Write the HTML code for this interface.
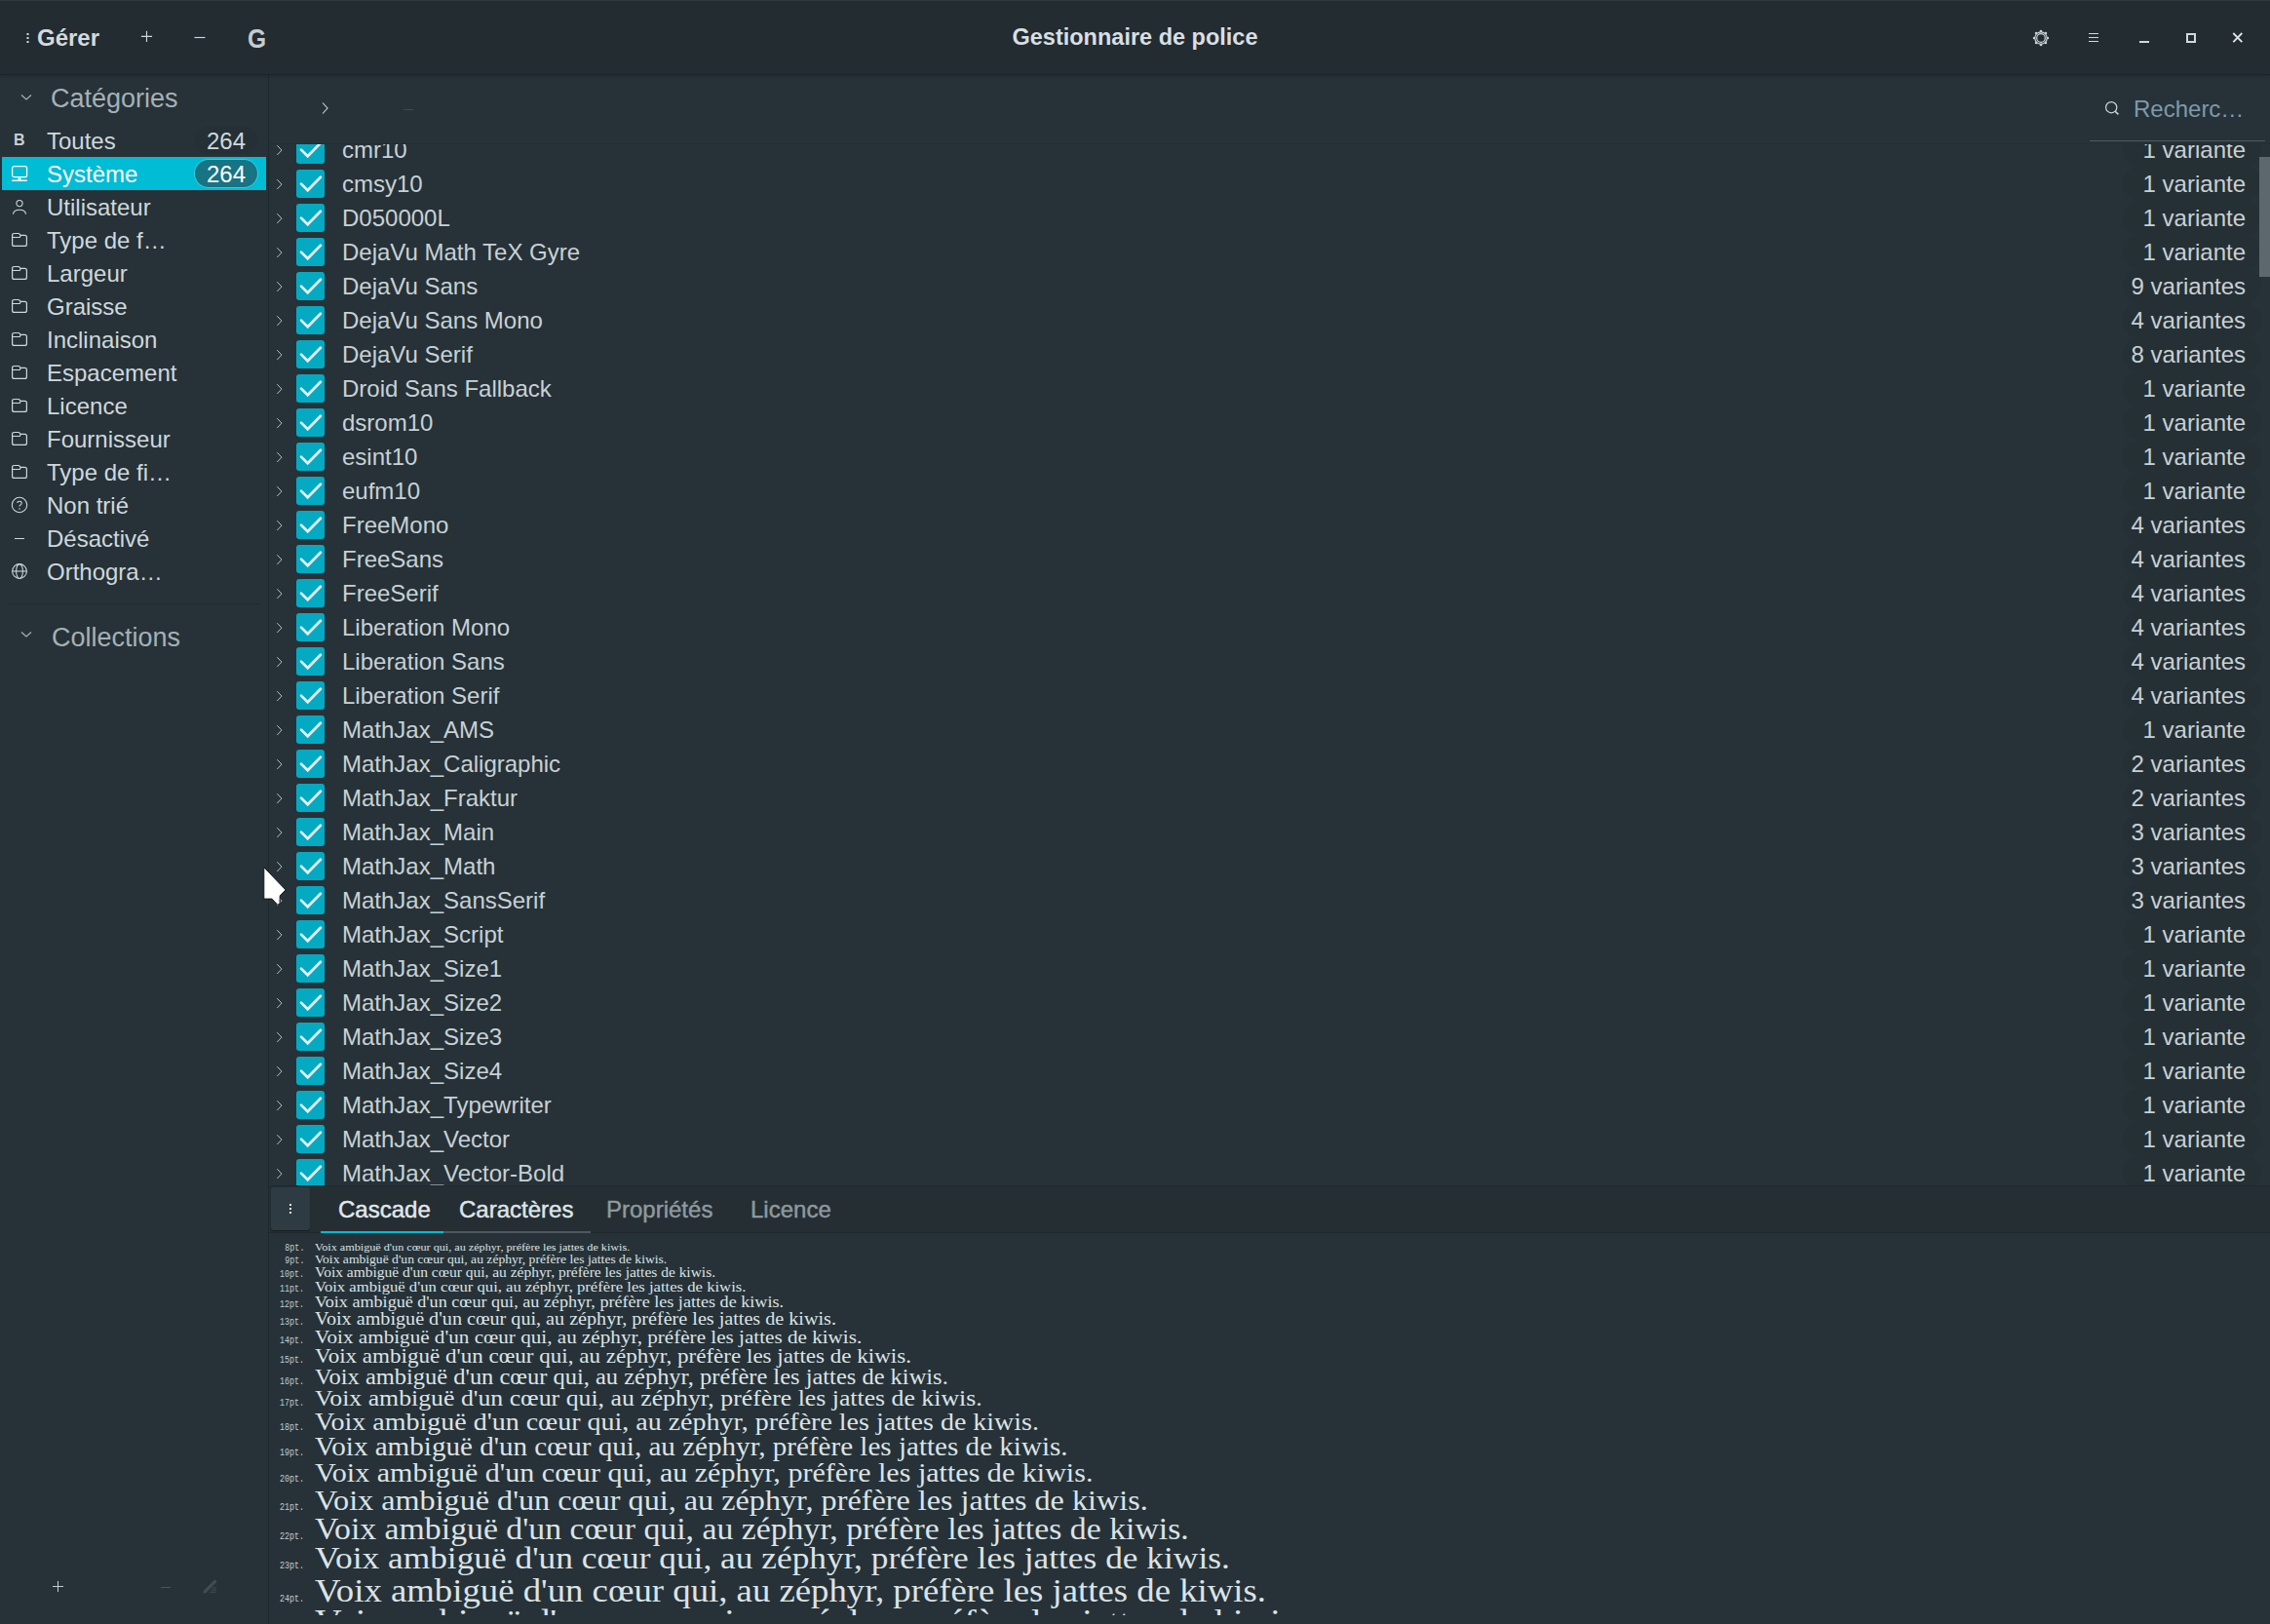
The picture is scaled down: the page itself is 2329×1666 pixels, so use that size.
<!DOCTYPE html><html><head><meta charset="utf-8"><title>Gestionnaire de police</title><style>
*{margin:0;padding:0;box-sizing:border-box}
html,body{width:2329px;height:1666px;overflow:hidden;background:#263238;font-family:"Liberation Sans",sans-serif;color:#cfd8dc}
.abs{position:absolute}
#hdr{position:absolute;left:0;top:0;width:2329px;height:77px;background:#222c31;border-top:1px solid #2f393e;border-bottom:1px solid #1c2428;box-shadow:0 1px 3px rgba(0,0,0,0.18);z-index:5}
.t{position:absolute;white-space:nowrap;line-height:1}
#side{position:absolute;left:0;top:77px;width:275px;height:1589px;background:#263238}
#sideline{position:absolute;left:275px;top:77px;width:1px;height:1589px;background:#1f282c}
.srow{position:absolute;left:2px;width:271px;height:34px}
.srow.sel{background:#00bcd4}
.stext{position:absolute;left:46px;top:1px;font-size:24px;line-height:34px;color:#cfd8dc}
.sel .stext{color:#ffffff}
.scount{position:absolute;left:198px;top:3px;width:64px;height:28px;border-radius:14px;font-size:24px;line-height:30px;text-align:center;color:#cfd8dc;background:#243036}
.sel .scount{background:#187383;color:#fff;box-shadow:0 0 0 1px rgba(120,225,240,0.45)}
.ic{position:absolute;left:8px}
.bicon{position:absolute;left:12px;font-weight:bold;font-size:16px;line-height:26px;color:#c8d0d4}
#list{position:absolute;left:276px;top:148px;width:2053px;height:1068px;overflow:hidden}
.row{position:absolute;left:0;width:2053px;height:35px}
.chev{position:absolute;left:6px;top:11px}
.cb{position:absolute;left:28px;top:3px;width:29px;height:29px;border-radius:3px;background:#04aac2}
.cb svg{position:absolute;left:0;top:0}
.name{position:absolute;left:75px;top:0;font-size:24px;line-height:35px;color:#c8d1d5;white-space:nowrap}
.var{position:absolute;right:25px;top:0;font-size:24px;line-height:35px;color:#c8d1d5;white-space:nowrap;text-align:right}
.pill{position:absolute;right:9px;top:0;width:142px;height:35px;border-radius:17px;background:#253035}
#tabs{position:absolute;left:276px;top:1217px;width:2053px;height:48px;background:#242e33;border-bottom:1px solid #1f282c}
.tab{position:absolute;top:0;font-size:24px;line-height:48px;white-space:nowrap;-webkit-text-stroke:0.45px currentColor}
#prev{position:absolute;left:276px;top:1265px;width:2053px;height:392px;overflow:hidden;background:#263238}
.pl{position:absolute;white-space:nowrap;line-height:1}
.lab{position:absolute;font-family:"Liberation Mono",monospace;color:#c3cbcf;font-size:11px;white-space:nowrap;transform:scaleX(0.76);transform-origin:right bottom;line-height:1}
.ser{position:absolute;font-family:"Liberation Serif",serif;color:#dce3e6;white-space:nowrap;line-height:1;transform-origin:left bottom}
</style></head><body>
<div id="hdr">
<svg class="abs" style="left:26px;top:32px" width="5" height="13" viewBox="0 0 5 13"><rect x="1.5" y="1" width="2" height="2" fill="#d6dde0"/><rect x="1.5" y="5" width="2" height="2" fill="#d6dde0"/><rect x="1.5" y="9" width="2" height="2" fill="#d6dde0"/></svg>
<div class="t" style="left:38px;top:26px;font-weight:bold;font-size:24px;color:#d3dadd">Gérer</div>
<svg class="abs" style="left:143px;top:29px" width="15" height="15" viewBox="0 0 15 15"><path d="M7.5 1.8v11.2M1.9 7.4h11.2" stroke="#cfd8dc" stroke-width="1.15"/></svg>
<svg class="abs" style="left:198px;top:30px" width="15" height="15" viewBox="0 0 15 15"><path d="M1.5 7.5h11" stroke="#cfd8dc" stroke-width="1.15"/></svg>
<div class="t" style="left:254px;top:24px;font-weight:bold;font-size:28.5px;color:#c5cdd1;transform:scaleX(0.86);transform-origin:left top">G</div>
<div class="t" style="left:0;width:2329px;text-align:center;top:26px;font-weight:bold;font-size:23.5px;color:#d8dfe2">Gestionnaire de police</div>
<svg class="abs" style="left:2084px;top:28px" width="20" height="20" viewBox="0 0 20 20"><g fill="#c9d1d5"><circle cx="10" cy="10" r="6.8"/><circle cx="10.00" cy="3.10" r="1.35"/><circle cx="5.12" cy="5.12" r="1.35"/><circle cx="3.10" cy="10.00" r="1.35"/><circle cx="5.12" cy="14.88" r="1.35"/><circle cx="10.00" cy="16.90" r="1.35"/><circle cx="14.88" cy="14.88" r="1.35"/><circle cx="16.90" cy="10.00" r="1.35"/><circle cx="14.88" cy="5.12" r="1.35"/></g><circle cx="10" cy="10" r="5.6" fill="#222c31"/><circle cx="10" cy="10" r="4.3" fill="none" stroke="#c9d1d5" stroke-width="1.2"/></svg>
<svg class="abs" style="left:2141px;top:29px" width="14" height="15" viewBox="0 0 14 15"><path d="M2 4.5h10M2 8.5h10M2 12.5h10" stroke="#cfd8dc" stroke-width="1"/></svg>
<div class="abs" style="left:2195px;top:41px;width:10px;height:2px;background:#cfd8dc"></div>
<div class="abs" style="left:2243px;top:33px;width:10px;height:10px;border:2px solid #cfd8dc"></div>
<svg class="abs" style="left:2289px;top:30px" width="14" height="14" viewBox="0 0 14 14"><path d="M2.3 3l9 9.2M11.3 3l-9 9.2" stroke="#dfe5e7" stroke-width="1.8"/></svg>
</div>
<div id="side">
<svg class="abs" style="left:20px;top:18px" width="14" height="10" viewBox="0 0 14 10"><path d="M2 2.5l5 4.5 5-4.5" fill="none" stroke="#aab5ba" stroke-width="1.1"/></svg>
<div class="t" style="left:52px;top:11px;font-size:27px;color:#a5b1b6">Catégories</div>
<div class="srow" style="top:50px">
<div class="bicon" style="top:4px">B</div>
<div class="stext">Toutes</div>
<div class="scount">264</div>
</div>
<div class="srow sel" style="top:84px">
<svg class="ic" style="top:7px" width="20" height="20" viewBox="0 0 20 20"><rect x="2.6" y="2.7" width="15" height="11" rx="2" fill="none" stroke="#ffffff" stroke-width="1.25"/><rect x="2" y="16.6" width="16" height="1.5" rx="0.6" fill="#ffffff"/><rect x="8.6" y="14" width="2.8" height="2.8" fill="#ffffff"/></svg>
<div class="stext">Système</div>
<div class="scount">264</div>
</div>
<div class="srow" style="top:118px">
<svg class="ic" style="top:7px" width="20" height="20" viewBox="0 0 20 20"><circle cx="10" cy="6.6" r="3.1" fill="none" stroke="#cfd8dc" stroke-width="1.1"/><path d="M3.5 17.8 C3.8 14.6 6.6 13.3 10 13.3 C13.4 13.3 16.2 14.6 16.5 17.8" fill="none" stroke="#cfd8dc" stroke-width="1.1"/></svg>
<div class="stext">Utilisateur</div>
</div>
<div class="srow" style="top:152px">
<svg class="ic" style="top:7px" width="20" height="20" viewBox="0 0 20 20"><path d="M2.6 5.5V14.4Q2.6 16.4 4.6 16.4H15.4Q17.4 16.4 17.4 14.4V7.3Q17.4 5.3 15.4 5.3H11L9.9 3.9Q9.6 3.5 9 3.5H4.6Q2.6 3.5 2.6 5.5Z M2.6 7.5H9.6Q10.2 7.5 10.5 7.1L11.3 5.5" fill="none" stroke="#cfd8dc" stroke-width="1.2" stroke-linejoin="round"/></svg>
<div class="stext">Type de f…</div>
</div>
<div class="srow" style="top:186px">
<svg class="ic" style="top:7px" width="20" height="20" viewBox="0 0 20 20"><path d="M2.6 5.5V14.4Q2.6 16.4 4.6 16.4H15.4Q17.4 16.4 17.4 14.4V7.3Q17.4 5.3 15.4 5.3H11L9.9 3.9Q9.6 3.5 9 3.5H4.6Q2.6 3.5 2.6 5.5Z M2.6 7.5H9.6Q10.2 7.5 10.5 7.1L11.3 5.5" fill="none" stroke="#cfd8dc" stroke-width="1.2" stroke-linejoin="round"/></svg>
<div class="stext">Largeur</div>
</div>
<div class="srow" style="top:220px">
<svg class="ic" style="top:7px" width="20" height="20" viewBox="0 0 20 20"><path d="M2.6 5.5V14.4Q2.6 16.4 4.6 16.4H15.4Q17.4 16.4 17.4 14.4V7.3Q17.4 5.3 15.4 5.3H11L9.9 3.9Q9.6 3.5 9 3.5H4.6Q2.6 3.5 2.6 5.5Z M2.6 7.5H9.6Q10.2 7.5 10.5 7.1L11.3 5.5" fill="none" stroke="#cfd8dc" stroke-width="1.2" stroke-linejoin="round"/></svg>
<div class="stext">Graisse</div>
</div>
<div class="srow" style="top:254px">
<svg class="ic" style="top:7px" width="20" height="20" viewBox="0 0 20 20"><path d="M2.6 5.5V14.4Q2.6 16.4 4.6 16.4H15.4Q17.4 16.4 17.4 14.4V7.3Q17.4 5.3 15.4 5.3H11L9.9 3.9Q9.6 3.5 9 3.5H4.6Q2.6 3.5 2.6 5.5Z M2.6 7.5H9.6Q10.2 7.5 10.5 7.1L11.3 5.5" fill="none" stroke="#cfd8dc" stroke-width="1.2" stroke-linejoin="round"/></svg>
<div class="stext">Inclinaison</div>
</div>
<div class="srow" style="top:288px">
<svg class="ic" style="top:7px" width="20" height="20" viewBox="0 0 20 20"><path d="M2.6 5.5V14.4Q2.6 16.4 4.6 16.4H15.4Q17.4 16.4 17.4 14.4V7.3Q17.4 5.3 15.4 5.3H11L9.9 3.9Q9.6 3.5 9 3.5H4.6Q2.6 3.5 2.6 5.5Z M2.6 7.5H9.6Q10.2 7.5 10.5 7.1L11.3 5.5" fill="none" stroke="#cfd8dc" stroke-width="1.2" stroke-linejoin="round"/></svg>
<div class="stext">Espacement</div>
</div>
<div class="srow" style="top:322px">
<svg class="ic" style="top:7px" width="20" height="20" viewBox="0 0 20 20"><path d="M2.6 5.5V14.4Q2.6 16.4 4.6 16.4H15.4Q17.4 16.4 17.4 14.4V7.3Q17.4 5.3 15.4 5.3H11L9.9 3.9Q9.6 3.5 9 3.5H4.6Q2.6 3.5 2.6 5.5Z M2.6 7.5H9.6Q10.2 7.5 10.5 7.1L11.3 5.5" fill="none" stroke="#cfd8dc" stroke-width="1.2" stroke-linejoin="round"/></svg>
<div class="stext">Licence</div>
</div>
<div class="srow" style="top:356px">
<svg class="ic" style="top:7px" width="20" height="20" viewBox="0 0 20 20"><path d="M2.6 5.5V14.4Q2.6 16.4 4.6 16.4H15.4Q17.4 16.4 17.4 14.4V7.3Q17.4 5.3 15.4 5.3H11L9.9 3.9Q9.6 3.5 9 3.5H4.6Q2.6 3.5 2.6 5.5Z M2.6 7.5H9.6Q10.2 7.5 10.5 7.1L11.3 5.5" fill="none" stroke="#cfd8dc" stroke-width="1.2" stroke-linejoin="round"/></svg>
<div class="stext">Fournisseur</div>
</div>
<div class="srow" style="top:390px">
<svg class="ic" style="top:7px" width="20" height="20" viewBox="0 0 20 20"><path d="M2.6 5.5V14.4Q2.6 16.4 4.6 16.4H15.4Q17.4 16.4 17.4 14.4V7.3Q17.4 5.3 15.4 5.3H11L9.9 3.9Q9.6 3.5 9 3.5H4.6Q2.6 3.5 2.6 5.5Z M2.6 7.5H9.6Q10.2 7.5 10.5 7.1L11.3 5.5" fill="none" stroke="#cfd8dc" stroke-width="1.2" stroke-linejoin="round"/></svg>
<div class="stext">Type de fi…</div>
</div>
<div class="srow" style="top:424px">
<svg class="ic" style="top:7px" width="20" height="20" viewBox="0 0 20 20"><circle cx="10" cy="10" r="7.7" fill="none" stroke="#cfd8dc" stroke-width="1.05"/><path d="M7.8 8 C7.8 5.6 12.2 5.6 12.2 8 C12.2 9.8 10 9.8 10 11.6" fill="none" stroke="#cfd8dc" stroke-width="1.05"/><circle cx="10" cy="14" r="0.75" fill="#cfd8dc"/></svg>
<div class="stext">Non trié</div>
</div>
<div class="srow" style="top:458px">
<svg class="ic" style="top:7px" width="20" height="20" viewBox="0 0 20 20"><path d="M5 10.5h10" stroke="#cfd8dc" stroke-width="1"/></svg>
<div class="stext">Désactivé</div>
</div>
<div class="srow" style="top:492px">
<svg class="ic" style="top:7px" width="20" height="20" viewBox="0 0 20 20"><circle cx="10" cy="10" r="7.4" fill="none" stroke="#cfd8dc" stroke-width="1.05"/><ellipse cx="10" cy="10" rx="3.4" ry="7.4" fill="none" stroke="#cfd8dc" stroke-width="1.05"/><path d="M2.6 10h14.8" stroke="#cfd8dc" stroke-width="1.05"/></svg>
<div class="stext">Orthogra…</div>
</div>
<div class="abs" style="left:8px;top:542px;width:259px;height:1px;background:#222b30"></div>
<svg class="abs" style="left:20px;top:569px" width="14" height="10" viewBox="0 0 14 10"><path d="M2 2.5l5 4.5 5-4.5" fill="none" stroke="#aab5ba" stroke-width="1.1"/></svg>
<div class="t" style="left:53px;top:564px;font-size:27px;color:#a5b1b6">Collections</div>
<svg class="abs" style="left:52px;top:1542px" width="15" height="15" viewBox="0 0 15 15"><path d="M7.5 3v11M2 8.5h11" stroke="#c5cdd1" stroke-width="1"/></svg>
<svg class="abs" style="left:163px;top:1544px" width="15" height="15" viewBox="0 0 15 15"><path d="M2 7.5h10" stroke="#4a565c" stroke-width="1"/></svg>
<svg class="abs" style="left:206px;top:1542px" width="18" height="18" viewBox="0 0 18 18"><path d="M4.2 13.8L14.6 3.4" stroke="#3f4c53" stroke-width="3.2" stroke-linecap="round"/><path d="M2.2 15.8l1.2-3.4 2.2 2.2z" fill="#3f4c53"/><path d="M11.5 10h4.5M10.5 12.1h5.5M9.3 14.3h6.7" stroke="#3f4c53" stroke-width="1"/></svg>
</div>
<div id="sideline"></div>
<svg class="abs" style="left:328px;top:104px" width="10" height="14" viewBox="0 0 10 14"><path d="M3 1.5l5 5.5-5 5.5" fill="none" stroke="#cfd8dc" stroke-width="1.1"/></svg>
<div class="abs" style="left:414px;top:112px;width:10px;height:1px;background:#3e4a50"></div>
<svg class="abs" style="left:2157px;top:101px" width="20" height="20" viewBox="0 0 20 20"><circle cx="9.2" cy="9.2" r="5.6" fill="none" stroke="#cfd8dc" stroke-width="1.2"/><path d="M13.2 13.2l3.2 3.2" stroke="#cfd8dc" stroke-width="1.5"/></svg>
<div class="t" style="left:2189px;top:100px;font-size:24px;color:#7d9aab">Recherc…</div>
<div class="abs" style="left:2144px;top:144px;width:180px;height:1px;background:#4c5a61"></div>
<div class="abs" style="left:276px;top:147px;width:2053px;height:1px;background:#232d32"></div>
<div id="list">
<div class="row" style="top:-12px"><div class="pill"></div><svg class="chev" width="10" height="14" viewBox="0 0 10 14"><path d="M2.3 2.2L7 7.1 2.3 12" fill="none" stroke="#b4bfc4" stroke-width="1"/></svg><div class="cb"><svg width="29" height="29" viewBox="0 0 29 29"><path d="M5 14.6l6.7 6.7 13.2-13.6" fill="none" stroke="#e9eff1" stroke-width="2.7" stroke-linecap="round"/></svg></div><div class="name">cmr10</div><div class="var">1 variante</div></div>
<div class="row" style="top:23px"><div class="pill"></div><svg class="chev" width="10" height="14" viewBox="0 0 10 14"><path d="M2.3 2.2L7 7.1 2.3 12" fill="none" stroke="#b4bfc4" stroke-width="1"/></svg><div class="cb"><svg width="29" height="29" viewBox="0 0 29 29"><path d="M5 14.6l6.7 6.7 13.2-13.6" fill="none" stroke="#e9eff1" stroke-width="2.7" stroke-linecap="round"/></svg></div><div class="name">cmsy10</div><div class="var">1 variante</div></div>
<div class="row" style="top:58px"><div class="pill"></div><svg class="chev" width="10" height="14" viewBox="0 0 10 14"><path d="M2.3 2.2L7 7.1 2.3 12" fill="none" stroke="#b4bfc4" stroke-width="1"/></svg><div class="cb"><svg width="29" height="29" viewBox="0 0 29 29"><path d="M5 14.6l6.7 6.7 13.2-13.6" fill="none" stroke="#e9eff1" stroke-width="2.7" stroke-linecap="round"/></svg></div><div class="name">D050000L</div><div class="var">1 variante</div></div>
<div class="row" style="top:93px"><div class="pill"></div><svg class="chev" width="10" height="14" viewBox="0 0 10 14"><path d="M2.3 2.2L7 7.1 2.3 12" fill="none" stroke="#b4bfc4" stroke-width="1"/></svg><div class="cb"><svg width="29" height="29" viewBox="0 0 29 29"><path d="M5 14.6l6.7 6.7 13.2-13.6" fill="none" stroke="#e9eff1" stroke-width="2.7" stroke-linecap="round"/></svg></div><div class="name">DejaVu Math TeX Gyre</div><div class="var">1 variante</div></div>
<div class="row" style="top:128px"><div class="pill"></div><svg class="chev" width="10" height="14" viewBox="0 0 10 14"><path d="M2.3 2.2L7 7.1 2.3 12" fill="none" stroke="#b4bfc4" stroke-width="1"/></svg><div class="cb"><svg width="29" height="29" viewBox="0 0 29 29"><path d="M5 14.6l6.7 6.7 13.2-13.6" fill="none" stroke="#e9eff1" stroke-width="2.7" stroke-linecap="round"/></svg></div><div class="name">DejaVu Sans</div><div class="var">9 variantes</div></div>
<div class="row" style="top:163px"><div class="pill"></div><svg class="chev" width="10" height="14" viewBox="0 0 10 14"><path d="M2.3 2.2L7 7.1 2.3 12" fill="none" stroke="#b4bfc4" stroke-width="1"/></svg><div class="cb"><svg width="29" height="29" viewBox="0 0 29 29"><path d="M5 14.6l6.7 6.7 13.2-13.6" fill="none" stroke="#e9eff1" stroke-width="2.7" stroke-linecap="round"/></svg></div><div class="name">DejaVu Sans Mono</div><div class="var">4 variantes</div></div>
<div class="row" style="top:198px"><div class="pill"></div><svg class="chev" width="10" height="14" viewBox="0 0 10 14"><path d="M2.3 2.2L7 7.1 2.3 12" fill="none" stroke="#b4bfc4" stroke-width="1"/></svg><div class="cb"><svg width="29" height="29" viewBox="0 0 29 29"><path d="M5 14.6l6.7 6.7 13.2-13.6" fill="none" stroke="#e9eff1" stroke-width="2.7" stroke-linecap="round"/></svg></div><div class="name">DejaVu Serif</div><div class="var">8 variantes</div></div>
<div class="row" style="top:233px"><div class="pill"></div><svg class="chev" width="10" height="14" viewBox="0 0 10 14"><path d="M2.3 2.2L7 7.1 2.3 12" fill="none" stroke="#b4bfc4" stroke-width="1"/></svg><div class="cb"><svg width="29" height="29" viewBox="0 0 29 29"><path d="M5 14.6l6.7 6.7 13.2-13.6" fill="none" stroke="#e9eff1" stroke-width="2.7" stroke-linecap="round"/></svg></div><div class="name">Droid Sans Fallback</div><div class="var">1 variante</div></div>
<div class="row" style="top:268px"><div class="pill"></div><svg class="chev" width="10" height="14" viewBox="0 0 10 14"><path d="M2.3 2.2L7 7.1 2.3 12" fill="none" stroke="#b4bfc4" stroke-width="1"/></svg><div class="cb"><svg width="29" height="29" viewBox="0 0 29 29"><path d="M5 14.6l6.7 6.7 13.2-13.6" fill="none" stroke="#e9eff1" stroke-width="2.7" stroke-linecap="round"/></svg></div><div class="name">dsrom10</div><div class="var">1 variante</div></div>
<div class="row" style="top:303px"><div class="pill"></div><svg class="chev" width="10" height="14" viewBox="0 0 10 14"><path d="M2.3 2.2L7 7.1 2.3 12" fill="none" stroke="#b4bfc4" stroke-width="1"/></svg><div class="cb"><svg width="29" height="29" viewBox="0 0 29 29"><path d="M5 14.6l6.7 6.7 13.2-13.6" fill="none" stroke="#e9eff1" stroke-width="2.7" stroke-linecap="round"/></svg></div><div class="name">esint10</div><div class="var">1 variante</div></div>
<div class="row" style="top:338px"><div class="pill"></div><svg class="chev" width="10" height="14" viewBox="0 0 10 14"><path d="M2.3 2.2L7 7.1 2.3 12" fill="none" stroke="#b4bfc4" stroke-width="1"/></svg><div class="cb"><svg width="29" height="29" viewBox="0 0 29 29"><path d="M5 14.6l6.7 6.7 13.2-13.6" fill="none" stroke="#e9eff1" stroke-width="2.7" stroke-linecap="round"/></svg></div><div class="name">eufm10</div><div class="var">1 variante</div></div>
<div class="row" style="top:373px"><div class="pill"></div><svg class="chev" width="10" height="14" viewBox="0 0 10 14"><path d="M2.3 2.2L7 7.1 2.3 12" fill="none" stroke="#b4bfc4" stroke-width="1"/></svg><div class="cb"><svg width="29" height="29" viewBox="0 0 29 29"><path d="M5 14.6l6.7 6.7 13.2-13.6" fill="none" stroke="#e9eff1" stroke-width="2.7" stroke-linecap="round"/></svg></div><div class="name">FreeMono</div><div class="var">4 variantes</div></div>
<div class="row" style="top:408px"><div class="pill"></div><svg class="chev" width="10" height="14" viewBox="0 0 10 14"><path d="M2.3 2.2L7 7.1 2.3 12" fill="none" stroke="#b4bfc4" stroke-width="1"/></svg><div class="cb"><svg width="29" height="29" viewBox="0 0 29 29"><path d="M5 14.6l6.7 6.7 13.2-13.6" fill="none" stroke="#e9eff1" stroke-width="2.7" stroke-linecap="round"/></svg></div><div class="name">FreeSans</div><div class="var">4 variantes</div></div>
<div class="row" style="top:443px"><div class="pill"></div><svg class="chev" width="10" height="14" viewBox="0 0 10 14"><path d="M2.3 2.2L7 7.1 2.3 12" fill="none" stroke="#b4bfc4" stroke-width="1"/></svg><div class="cb"><svg width="29" height="29" viewBox="0 0 29 29"><path d="M5 14.6l6.7 6.7 13.2-13.6" fill="none" stroke="#e9eff1" stroke-width="2.7" stroke-linecap="round"/></svg></div><div class="name">FreeSerif</div><div class="var">4 variantes</div></div>
<div class="row" style="top:478px"><div class="pill"></div><svg class="chev" width="10" height="14" viewBox="0 0 10 14"><path d="M2.3 2.2L7 7.1 2.3 12" fill="none" stroke="#b4bfc4" stroke-width="1"/></svg><div class="cb"><svg width="29" height="29" viewBox="0 0 29 29"><path d="M5 14.6l6.7 6.7 13.2-13.6" fill="none" stroke="#e9eff1" stroke-width="2.7" stroke-linecap="round"/></svg></div><div class="name">Liberation Mono</div><div class="var">4 variantes</div></div>
<div class="row" style="top:513px"><div class="pill"></div><svg class="chev" width="10" height="14" viewBox="0 0 10 14"><path d="M2.3 2.2L7 7.1 2.3 12" fill="none" stroke="#b4bfc4" stroke-width="1"/></svg><div class="cb"><svg width="29" height="29" viewBox="0 0 29 29"><path d="M5 14.6l6.7 6.7 13.2-13.6" fill="none" stroke="#e9eff1" stroke-width="2.7" stroke-linecap="round"/></svg></div><div class="name">Liberation Sans</div><div class="var">4 variantes</div></div>
<div class="row" style="top:548px"><div class="pill"></div><svg class="chev" width="10" height="14" viewBox="0 0 10 14"><path d="M2.3 2.2L7 7.1 2.3 12" fill="none" stroke="#b4bfc4" stroke-width="1"/></svg><div class="cb"><svg width="29" height="29" viewBox="0 0 29 29"><path d="M5 14.6l6.7 6.7 13.2-13.6" fill="none" stroke="#e9eff1" stroke-width="2.7" stroke-linecap="round"/></svg></div><div class="name">Liberation Serif</div><div class="var">4 variantes</div></div>
<div class="row" style="top:583px"><div class="pill"></div><svg class="chev" width="10" height="14" viewBox="0 0 10 14"><path d="M2.3 2.2L7 7.1 2.3 12" fill="none" stroke="#b4bfc4" stroke-width="1"/></svg><div class="cb"><svg width="29" height="29" viewBox="0 0 29 29"><path d="M5 14.6l6.7 6.7 13.2-13.6" fill="none" stroke="#e9eff1" stroke-width="2.7" stroke-linecap="round"/></svg></div><div class="name">MathJax_AMS</div><div class="var">1 variante</div></div>
<div class="row" style="top:618px"><div class="pill"></div><svg class="chev" width="10" height="14" viewBox="0 0 10 14"><path d="M2.3 2.2L7 7.1 2.3 12" fill="none" stroke="#b4bfc4" stroke-width="1"/></svg><div class="cb"><svg width="29" height="29" viewBox="0 0 29 29"><path d="M5 14.6l6.7 6.7 13.2-13.6" fill="none" stroke="#e9eff1" stroke-width="2.7" stroke-linecap="round"/></svg></div><div class="name">MathJax_Caligraphic</div><div class="var">2 variantes</div></div>
<div class="row" style="top:653px"><div class="pill"></div><svg class="chev" width="10" height="14" viewBox="0 0 10 14"><path d="M2.3 2.2L7 7.1 2.3 12" fill="none" stroke="#b4bfc4" stroke-width="1"/></svg><div class="cb"><svg width="29" height="29" viewBox="0 0 29 29"><path d="M5 14.6l6.7 6.7 13.2-13.6" fill="none" stroke="#e9eff1" stroke-width="2.7" stroke-linecap="round"/></svg></div><div class="name">MathJax_Fraktur</div><div class="var">2 variantes</div></div>
<div class="row" style="top:688px"><div class="pill"></div><svg class="chev" width="10" height="14" viewBox="0 0 10 14"><path d="M2.3 2.2L7 7.1 2.3 12" fill="none" stroke="#b4bfc4" stroke-width="1"/></svg><div class="cb"><svg width="29" height="29" viewBox="0 0 29 29"><path d="M5 14.6l6.7 6.7 13.2-13.6" fill="none" stroke="#e9eff1" stroke-width="2.7" stroke-linecap="round"/></svg></div><div class="name">MathJax_Main</div><div class="var">3 variantes</div></div>
<div class="row" style="top:723px"><div class="pill"></div><svg class="chev" width="10" height="14" viewBox="0 0 10 14"><path d="M2.3 2.2L7 7.1 2.3 12" fill="none" stroke="#b4bfc4" stroke-width="1"/></svg><div class="cb"><svg width="29" height="29" viewBox="0 0 29 29"><path d="M5 14.6l6.7 6.7 13.2-13.6" fill="none" stroke="#e9eff1" stroke-width="2.7" stroke-linecap="round"/></svg></div><div class="name">MathJax_Math</div><div class="var">3 variantes</div></div>
<div class="row" style="top:758px"><div class="pill"></div><svg class="chev" width="10" height="14" viewBox="0 0 10 14"><path d="M2.3 2.2L7 7.1 2.3 12" fill="none" stroke="#b4bfc4" stroke-width="1"/></svg><div class="cb"><svg width="29" height="29" viewBox="0 0 29 29"><path d="M5 14.6l6.7 6.7 13.2-13.6" fill="none" stroke="#e9eff1" stroke-width="2.7" stroke-linecap="round"/></svg></div><div class="name">MathJax_SansSerif</div><div class="var">3 variantes</div></div>
<div class="row" style="top:793px"><div class="pill"></div><svg class="chev" width="10" height="14" viewBox="0 0 10 14"><path d="M2.3 2.2L7 7.1 2.3 12" fill="none" stroke="#b4bfc4" stroke-width="1"/></svg><div class="cb"><svg width="29" height="29" viewBox="0 0 29 29"><path d="M5 14.6l6.7 6.7 13.2-13.6" fill="none" stroke="#e9eff1" stroke-width="2.7" stroke-linecap="round"/></svg></div><div class="name">MathJax_Script</div><div class="var">1 variante</div></div>
<div class="row" style="top:828px"><div class="pill"></div><svg class="chev" width="10" height="14" viewBox="0 0 10 14"><path d="M2.3 2.2L7 7.1 2.3 12" fill="none" stroke="#b4bfc4" stroke-width="1"/></svg><div class="cb"><svg width="29" height="29" viewBox="0 0 29 29"><path d="M5 14.6l6.7 6.7 13.2-13.6" fill="none" stroke="#e9eff1" stroke-width="2.7" stroke-linecap="round"/></svg></div><div class="name">MathJax_Size1</div><div class="var">1 variante</div></div>
<div class="row" style="top:863px"><div class="pill"></div><svg class="chev" width="10" height="14" viewBox="0 0 10 14"><path d="M2.3 2.2L7 7.1 2.3 12" fill="none" stroke="#b4bfc4" stroke-width="1"/></svg><div class="cb"><svg width="29" height="29" viewBox="0 0 29 29"><path d="M5 14.6l6.7 6.7 13.2-13.6" fill="none" stroke="#e9eff1" stroke-width="2.7" stroke-linecap="round"/></svg></div><div class="name">MathJax_Size2</div><div class="var">1 variante</div></div>
<div class="row" style="top:898px"><div class="pill"></div><svg class="chev" width="10" height="14" viewBox="0 0 10 14"><path d="M2.3 2.2L7 7.1 2.3 12" fill="none" stroke="#b4bfc4" stroke-width="1"/></svg><div class="cb"><svg width="29" height="29" viewBox="0 0 29 29"><path d="M5 14.6l6.7 6.7 13.2-13.6" fill="none" stroke="#e9eff1" stroke-width="2.7" stroke-linecap="round"/></svg></div><div class="name">MathJax_Size3</div><div class="var">1 variante</div></div>
<div class="row" style="top:933px"><div class="pill"></div><svg class="chev" width="10" height="14" viewBox="0 0 10 14"><path d="M2.3 2.2L7 7.1 2.3 12" fill="none" stroke="#b4bfc4" stroke-width="1"/></svg><div class="cb"><svg width="29" height="29" viewBox="0 0 29 29"><path d="M5 14.6l6.7 6.7 13.2-13.6" fill="none" stroke="#e9eff1" stroke-width="2.7" stroke-linecap="round"/></svg></div><div class="name">MathJax_Size4</div><div class="var">1 variante</div></div>
<div class="row" style="top:968px"><div class="pill"></div><svg class="chev" width="10" height="14" viewBox="0 0 10 14"><path d="M2.3 2.2L7 7.1 2.3 12" fill="none" stroke="#b4bfc4" stroke-width="1"/></svg><div class="cb"><svg width="29" height="29" viewBox="0 0 29 29"><path d="M5 14.6l6.7 6.7 13.2-13.6" fill="none" stroke="#e9eff1" stroke-width="2.7" stroke-linecap="round"/></svg></div><div class="name">MathJax_Typewriter</div><div class="var">1 variante</div></div>
<div class="row" style="top:1003px"><div class="pill"></div><svg class="chev" width="10" height="14" viewBox="0 0 10 14"><path d="M2.3 2.2L7 7.1 2.3 12" fill="none" stroke="#b4bfc4" stroke-width="1"/></svg><div class="cb"><svg width="29" height="29" viewBox="0 0 29 29"><path d="M5 14.6l6.7 6.7 13.2-13.6" fill="none" stroke="#e9eff1" stroke-width="2.7" stroke-linecap="round"/></svg></div><div class="name">MathJax_Vector</div><div class="var">1 variante</div></div>
<div class="row" style="top:1038px"><div class="pill"></div><svg class="chev" width="10" height="14" viewBox="0 0 10 14"><path d="M2.3 2.2L7 7.1 2.3 12" fill="none" stroke="#b4bfc4" stroke-width="1"/></svg><div class="cb"><svg width="29" height="29" viewBox="0 0 29 29"><path d="M5 14.6l6.7 6.7 13.2-13.6" fill="none" stroke="#e9eff1" stroke-width="2.7" stroke-linecap="round"/></svg></div><div class="name">MathJax_Vector-Bold</div><div class="var">1 variante</div></div>
</div>
<div class="abs" style="left:276px;top:1216px;width:2053px;height:1px;background:#20292d"></div>
<div class="abs" style="left:2318px;top:161px;width:11px;height:123px;background:#5d686e"></div>
<div id="tabs">
<div class="abs" style="left:2px;top:1px;width:40px;height:44px;border-radius:3px;background:#2e3b42;box-shadow:0 1px 1px rgba(0,0,0,0.35)"></div>
<svg class="abs" style="left:19px;top:17px" width="6" height="12" viewBox="0 0 6 12"><rect x="2" y="1" width="2" height="2" fill="#e0e6e8"/><rect x="2" y="5" width="2" height="2" fill="#e0e6e8"/><rect x="2" y="9" width="2" height="2" fill="#e0e6e8"/></svg>
<div class="tab" style="left:71px;color:#e3e8ea">Cascade</div>
<div class="tab" style="left:195px;color:#dfe5e8">Caractères</div>
<div class="tab" style="left:346px;color:#8e9a9f">Propriétés</div>
<div class="tab" style="left:494px;color:#8e9a9f">Licence</div>
<div class="abs" style="left:53px;top:46px;width:126px;height:2px;background:#00bcd4"></div>
<div class="abs" style="left:179px;top:46px;width:151px;height:2px;background:#4d595f"></div>
</div>
<div id="prev">
<div class="ser" style="left:47.30px;top:9.49px;font-size:11.12px;transform:scaleX(1.0956)">Voix ambiguë d'un cœur qui, au zéphyr, préfère les jattes de kiwis.</div>
<div class="lab" style="right:2017px;top:10.37px">8pt.</div>
<div class="ser" style="left:47.30px;top:21.02px;font-size:12.51px;transform:scaleX(1.0881)">Voix ambiguë d'un cœur qui, au zéphyr, préfère les jattes de kiwis.</div>
<div class="lab" style="right:2017px;top:23.07px">9pt.</div>
<div class="ser" style="left:47.30px;top:34.16px;font-size:13.90px;transform:scaleX(1.1142)">Voix ambiguë d'un cœur qui, au zéphyr, préfère les jattes de kiwis.</div>
<div class="lab" style="right:2017px;top:37.37px">10pt.</div>
<div class="ser" style="left:47.30px;top:47.29px;font-size:15.29px;transform:scaleX(1.0901)">Voix ambiguë d'un cœur qui, au zéphyr, préfère les jattes de kiwis.</div>
<div class="lab" style="right:2017px;top:51.67px">11pt.</div>
<div class="ser" style="left:47.30px;top:62.73px;font-size:16.68px;transform:scaleX(1.0863)">Voix ambiguë d'un cœur qui, au zéphyr, préfère les jattes de kiwis.</div>
<div class="lab" style="right:2017px;top:68.27px">12pt.</div>
<div class="ser" style="left:47.30px;top:79.17px;font-size:18.07px;transform:scaleX(1.1152)">Voix ambiguë d'un cœur qui, au zéphyr, préfère les jattes de kiwis.</div>
<div class="lab" style="right:2017px;top:85.87px">13pt.</div>
<div class="ser" style="left:47.30px;top:97.20px;font-size:19.46px;transform:scaleX(1.0872)">Voix ambiguë d'un cœur qui, au zéphyr, préfère les jattes de kiwis.</div>
<div class="lab" style="right:2017px;top:105.07px">14pt.</div>
<div class="ser" style="left:47.30px;top:115.94px;font-size:20.85px;transform:scaleX(1.1054)">Voix ambiguë d'un cœur qui, au zéphyr, préfère les jattes de kiwis.</div>
<div class="lab" style="right:2017px;top:124.97px">15pt.</div>
<div class="ser" style="left:47.30px;top:136.77px;font-size:22.24px;transform:scaleX(1.1003)">Voix ambiguë d'un cœur qui, au zéphyr, préfère les jattes de kiwis.</div>
<div class="lab" style="right:2017px;top:146.97px">16pt.</div>
<div class="ser" style="left:47.30px;top:157.71px;font-size:23.63px;transform:scaleX(1.0912)">Voix ambiguë d'un cœur qui, au zéphyr, préfère les jattes de kiwis.</div>
<div class="lab" style="right:2017px;top:169.07px">17pt.</div>
<div class="ser" style="left:47.30px;top:181.25px;font-size:25.02px;transform:scaleX(1.1182)">Voix ambiguë d'un cœur qui, au zéphyr, préfère les jattes de kiwis.</div>
<div class="lab" style="right:2017px;top:193.77px">18pt.</div>
<div class="ser" style="left:47.30px;top:206.38px;font-size:26.41px;transform:scaleX(1.1017)">Voix ambiguë d'un cœur qui, au zéphyr, préfère les jattes de kiwis.</div>
<div class="lab" style="right:2017px;top:220.07px">19pt.</div>
<div class="ser" style="left:47.30px;top:232.42px;font-size:27.80px;transform:scaleX(1.0815)">Voix ambiguë d'un cœur qui, au zéphyr, préfère les jattes de kiwis.</div>
<div class="lab" style="right:2017px;top:247.27px">20pt.</div>
<div class="ser" style="left:47.30px;top:260.15px;font-size:29.19px;transform:scaleX(1.1026)">Voix ambiguë d'un cœur qui, au zéphyr, préfère les jattes de kiwis.</div>
<div class="lab" style="right:2017px;top:276.17px">21pt.</div>
<div class="ser" style="left:47.30px;top:288.69px;font-size:30.58px;transform:scaleX(1.1042)">Voix ambiguë d'un cœur qui, au zéphyr, préfère les jattes de kiwis.</div>
<div class="lab" style="right:2017px;top:305.87px">22pt.</div>
<div class="ser" style="left:47.30px;top:318.13px;font-size:31.97px;transform:scaleX(1.1057)">Voix ambiguë d'un cœur qui, au zéphyr, préfère les jattes de kiwis.</div>
<div class="lab" style="right:2017px;top:336.47px">23pt.</div>
<div class="ser" style="left:47.30px;top:350.46px;font-size:33.36px;transform:scaleX(1.1016)">Voix ambiguë d'un cœur qui, au zéphyr, préfère les jattes de kiwis.</div>
<div class="lab" style="right:2017px;top:369.97px">24pt.</div>
<div class="ser" style="left:47.30px;top:383.30px;font-size:34.75px;transform:scaleX(1.1)">Voix ambiguë d'un cœur qui, au zéphyr, préfère les jattes de kiwis.</div>
<div class="lab" style="right:2017px;top:403.97px">25pt.</div>
</div>
<svg class="abs" style="left:268px;top:887px" width="30" height="44" viewBox="0 0 30 44"><path d="M2.8 2.7 L2.8 35.1 L11 35.1 L16.8 41.2 L19 40.2 L19.2 31.9 L25.1 25.9 Z" fill="#ffffff" stroke="#11181b" stroke-width="1" stroke-linejoin="miter"/></svg>
</body></html>
